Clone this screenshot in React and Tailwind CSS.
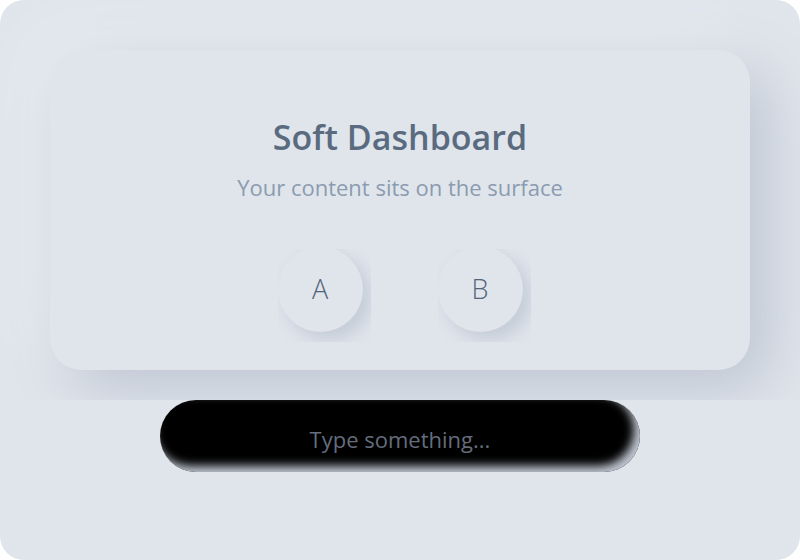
const RoundButton = ({label}) => {
    return (
        <div className="relative w-[85px] h-[85px]">
            <div className="absolute top-[2px] left-0 w-[93px] h-[93px] overflow-hidden">
                <button className="-mt-[2px] w-[85px] h-[85px] rounded-full bg-[#e0e5ec] text-[27px] font-light text-[#53647a] shadow-[8px_8px_18px_#c3cbd7,-4px_-4px_12px_#dfe4eb]">
                    {label}
                </button>
            </div>
        </div>
    )
}

const App = () => {
    return (
        <div className="w-[800px] h-[560px] bg-[#e0e5ec] rounded-3xl overflow-hidden font-['Open_Sans',sans-serif]">
            <section className="h-[400px] overflow-hidden p-[50px]">
                <div className="h-[320px] rounded-[32px] bg-[#e0e5ec] shadow-[20px_20px_60px_#bec6d2,-20px_-20px_60px_rgba(255,255,255,0.3)] flex flex-col items-center pt-[65px]">
                    <h1 className="text-[34px] leading-[44px] font-semibold text-[#5a6b80]">Soft Dashboard</h1>
                    <p className="mt-[13px] text-[22px] leading-[30px] text-[#8b9bb0]">Your content sits on the surface</p>
                    <div className="mt-[45px] flex gap-[75px]">
                        <RoundButton label="A"/>
                        <RoundButton label="B"/>
                    </div>
                </div>
            </section>

            <div className="flex justify-center">
                <input
                    type="text"
                    placeholder="Type something..."
                    className="w-[480px] h-[72px] pt-[6px] rounded-full bg-black text-center text-[22px] text-[#646d7c] placeholder:text-[#646d7c] outline-none shadow-[inset_-6px_-6px_10px_#c0c7d2]"/>
            </div>
        </div>
    )
}
export default App;
